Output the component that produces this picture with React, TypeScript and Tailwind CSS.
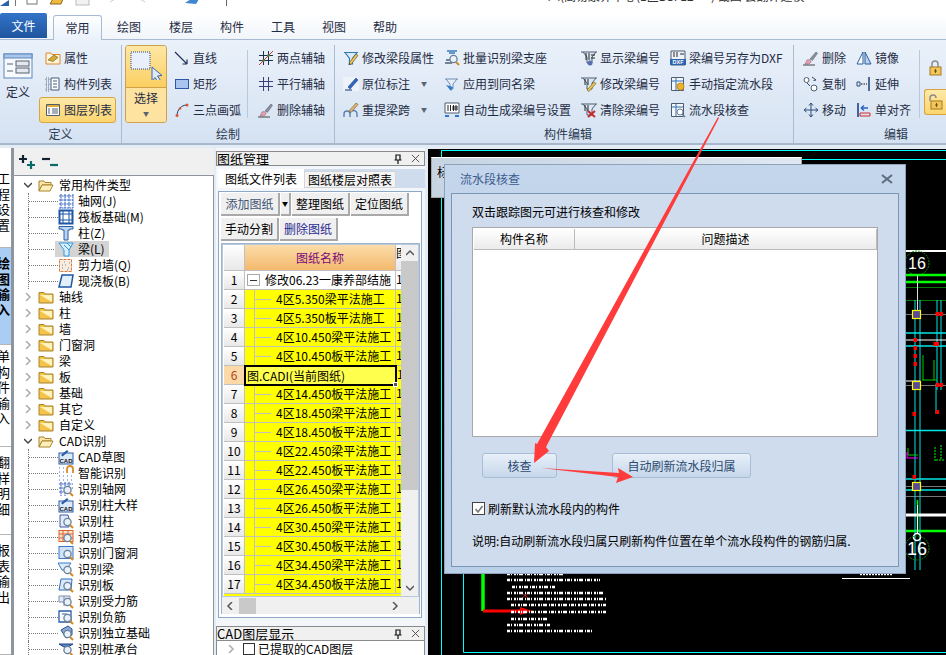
import type { ReactNode } from "react";

function Ico({ children, size = 16 }: { children: ReactNode; size?: number }) {
  return (
    <svg viewBox="0 0 16 16" width={size} height={size} className="shrink-0">
      {children}
    </svg>
  );
}

const Lens = () => (
  <>
    <circle cx="9.5" cy="9" r="3.6" fill="#e8f2fb" stroke="#6b7f96" strokeWidth="1.3" />
    <path d="M12 12l3 3" stroke="#d08a2a" strokeWidth="2" />
  </>
);

const Beam = ({ c = "#2f6db5" }: { c?: string }) => (
  <path d="M1 2.5h14M2 2.5l4.5 6v5.5h3V8.500l4.500-6z" fill="#dbe9f8" stroke={c} strokeWidth="1.200" />
);

const Hash = ({ c = "#1f2f55" }: { c?: string }) => (
  <path d="M5.500 1v14M10.500 1v14M1 5.500h14M1 10.500h14" stroke={c} strokeWidth="1" fill="none" />
);

const Pen = () => (
  <>
    <path d="M6 13l7-9 2 1.500-7 9z" fill="#e8c65a" stroke="#6d5a22" strokeWidth=".7" />
    <path d="M6 13l-.5 2 2-.5z" fill="#333" />
  </>
);

const Brush = () => (
  <>
    <path d="M7 9l6-7 1.500 1.300-5 7z" fill="#8a8fa8" stroke="#555" strokeWidth=".5" />
    <path d="M4 10c2-1 4 0 4 2-1 2-3 2-6 2z" fill="#e6a0b0" stroke="#8a5a6a" strokeWidth=".5" />
    <path d="M0 15h12" stroke="#444" />
  </>
);

const ribbonIcons: Record<string, ReactNode> = {
  attr: (
    <>
      <path d="M1 3h5l1 1.500h8V14H1z" fill="#fff4dc" stroke="#e0872a" />
      <path d="M3 10l6-5 4 2.500-5 4z" fill="#d3aa36" stroke="#6b5a20" strokeWidth=".6" />
    </>
  ),
  list: (
    <>
      <path d="M1 2h3v3H1zM1 7h3v3H1zM1 12h3v3H1z" fill="none" stroke="#5b6f88" strokeDasharray="1 1" />
      <path d="M6 2h8v12H6z" fill="#fff" stroke="#415a7c" />
      <path d="M8 5h4M8 8h4M8 11h4" stroke="#415a7c" />
    </>
  ),
  layer: (
    <>
      <path d="M1.500 2.500h13v11h-13z" fill="#fff" stroke="#4d5d70" />
      <path d="M2 3h12v2H2z" fill="#e5a933" />
      <path d="M3 7h2M3 9h2M3 11h2M7 7h6M7 9h6M7 11h6" stroke="#4d5d70" />
    </>
  ),
  line: <path d="M1 2l12 12M13 14V9.500M13 14H8.500" stroke="#1f2f55" strokeWidth="1.200" fill="none" />,
  rect: <rect x="1.500" y="3.500" width="13" height="9" fill="#a9c4ee" stroke="#2f57a8" />,
  arc: (
    <>
      <path d="M3 14C3 8 7 3 13 3" stroke="#1f3f6f" fill="none" />
      <circle cx="3" cy="13.500" r="1.500" fill="#e0532f" />
      <circle cx="13" cy="3" r="1.500" fill="#e0532f" />
      <circle cx="6" cy="6.500" r="1.300" fill="#e0532f" />
    </>
  ),
  twoPoint: (
    <>
      <Hash />
      <path d="M1 15L15 1" stroke="#d23030" />
      <circle cx="5.500" cy="10.500" r="1.300" fill="#4d8a30" />
      <circle cx="10.500" cy="5.500" r="1.300" fill="#4d8a30" />
    </>
  ),
  parallel: <Hash c="#3a3f6f" />,
  brush: <Brush />,
  beamPen: (
    <>
      <Beam c="#2f7cb5" />
      <Pen />
    </>
  ),
  markPen: (
    <>
      <path d="M0 1h16v14H0z" fill="#eef3fa" />
      <path d="M2 13h7v2H2z" fill="#7b93b8" />
      <path d="M5 11l8-9 2 2-8 9z" fill="#2f66c0" stroke="#1d3f80" strokeWidth=".6" />
    </>
  ),
  spanPen: (
    <>
      <path d="M1 15v-3a3 3 0 0 1 6 0v3M7 15v-3a3 3 0 0 1 7 0v3" stroke="#5a7fb0" fill="none" strokeWidth="1.400" />
      <path d="M6 9l7-8 2 1.500-7 8z" fill="#e3b27c" stroke="#6d5a22" strokeWidth=".6" />
    </>
  ),
  batch: (
    <>
      <path d="M3 1h10M5 3h6" stroke="#3a7cb5" strokeWidth="1.400" />
      <path d="M1 13h7M2 10h4" stroke="#4d5d70" strokeWidth="1.400" />
      <Lens />
    </>
  ),
  same: (
    <>
      <path d="M1 3h13M2 3l4 5v5h3V8l4-5" fill="#e6eef8" stroke="#6f8db0" />
      <path d="M2 9l5 6 2-4z" fill="#2f78c8" />
    </>
  ),
  autoNum: (
    <>
      <path d="M1 1h14v10H1z" fill="#fff" stroke="#4d5d70" />
      <path d="M4 3v6M6.500 3v6M9.500 3v6M12 3v6M8 5h6M8 7h6" stroke="#111" strokeWidth=".9" />
      <path d="M1 14h4M15 14h-4" stroke="#2f78c8" strokeWidth="2" />
    </>
  ),
  showNum: (
    <>
      <path d="M0 2h16M2 2l4 5v6h5V7l4-5" fill="#dde8f4" stroke="#4d5d70" />
      <path d="M5 3v7M8 3v7M10 5h4M10 8h4" stroke="#111" strokeWidth=".9" />
      <circle cx="9" cy="13" r="2.500" fill="#5a6fb0" />
    </>
  ),
  editNum: (
    <>
      <path d="M0 2h16M2 2l4 5v6h5V7l4-5" fill="#dde8f4" stroke="#4d5d70" />
      <path d="M4 3v6M7 3v6" stroke="#111" strokeWidth=".9" />
      <path d="M6 14l7-8 2 1.500-7 8z" fill="#e9c34f" stroke="#6d5a22" strokeWidth=".6" />
    </>
  ),
  clearNum: (
    <>
      <path d="M0 2h16M2 2l4 5v6h5V7l4-5" fill="#dde8f4" stroke="#4d5d70" />
      <path d="M4 3v6M7 3v6" stroke="#111" strokeWidth=".9" />
      <path d="M7 9l7 6M14 9l-7 6" stroke="#c02a2a" strokeWidth="2" />
    </>
  ),
  dxf: (
    <>
      <path d="M1 1h14v14H1z" fill="#eef3fa" stroke="#4d5d70" />
      <path d="M4 2v5M7 2v5M10 4h4" stroke="#111" strokeWidth=".9" />
      <path d="M0 9h16v6H0z" fill="#2a63b0" />
      <text x="8" y="14.400" fontSize="5.500" fill="#fff" textAnchor="middle" fontFamily="Liberation Sans" fontWeight="700">
        DXF
      </text>
    </>
  ),
  assign: (
    <>
      <path d="M1.500 1.500h12v13h-12z" fill="#f4f7fb" stroke="#4d5d70" />
      <path d="M6 2v12M2 5h11" stroke="#2f6db5" />
      <circle cx="10.500" cy="10.500" r="3.500" fill="#eeb32c" stroke="#c58a16" />
    </>
  ),
  check: (
    <>
      <path d="M1.500 1.500h12v13h-12z" fill="#f4f7fb" stroke="#4d5d70" />
      <path d="M6 2v12M2 5h11" stroke="#2f6db5" />
      <circle cx="10" cy="10" r="3" fill="#fff" stroke="#6b7f96" />
      <path d="M12 12l3 3" stroke="#6b7f96" strokeWidth="1.600" />
    </>
  ),
  del: <Brush />,
  copy: (
    <>
      <circle cx="3.500" cy="4" r="2.500" fill="#fff" stroke="#4d5d70" />
      <circle cx="11" cy="12" r="3" fill="#fff" stroke="#4d5d70" />
      <path d="M9 1l4 3M13 4l-2.500.5M7 10L4 7" stroke="#33445e" fill="none" />
    </>
  ),
  move: (
    <path d="M8 1v14M1 8h14M8 1L6 3.500M8 1l2 2.500M8 15l-2-2.500M8 15l2-2.500M1 8l2.500-2M1 8l2.500 2M15 8l-2.500-2M15 8l-2.500 2" stroke="#2a4d78" fill="none" />
  ),
  mirror: (
    <>
      <path d="M7 2L1 14h6z" fill="#fff" stroke="#2a5da0" />
      <path d="M9 2l6 12H9z" fill="#bcd2ef" stroke="#2a5da0" />
    </>
  ),
  extend: (
    <>
      <path d="M1 6h3v4H1z" fill="none" stroke="#2a4d78" />
      <path d="M5 8h6" stroke="#111" strokeDasharray="1.500 1" />
      <path d="M13 1v14" stroke="#2a4d78" strokeWidth="1.600" />
    </>
  ),
  align: (
    <>
      <path d="M2 1v14" stroke="#1f3f8f" strokeWidth="1.600" />
      <path d="M4 11h10v3H4z" fill="none" stroke="#d02a2a" />
      <path d="M12 6H5M5 6l3-2.500M5 6l3 2.500" stroke="#2a62c0" strokeWidth="1.300" fill="none" />
    </>
  ),
};

function Btn({ icon, label, drop = false, active = false, className = "" }: { icon: string; label: string; drop?: boolean; active?: boolean; className?: string }) {
  return (
    <div className={`flex h-[26px] items-center gap-[3px] whitespace-nowrap ${active ? "rounded-[3px] border border-[#d9a441] bg-linear-to-b from-[#fde9a8] to-[#fbd56e]" : ""} ${className}`}>
      <Ico>{ribbonIcons[icon]}</Ico>
      <span>{label}</span>
      {drop && <span className="ml-[8px] text-[6px] text-[#5a6270]">▼</span>}
    </div>
  );
}

function RibbonGroup({ title, className, children }: { title: string; className: string; children: ReactNode }) {
  return (
    <div className={`flex shrink-0 flex-col border-r border-[#a9bcd2] ${className}`}>
      <div className="flex h-[78px]">{children}</div>
      <div className="flex h-[22px] items-center justify-center pt-px text-[#2b3a50]">{title}</div>
    </div>
  );
}

function Ribbon() {
  return (
    <div className="flex h-[105px] border-b-2 border-[#a8b8cc] bg-linear-to-b from-[#eaf1fa] to-[#d5e2f2] pt-[5px] text-[#1f2c44]">
      <RibbonGroup title="定义" className="w-[122px]">
        <div className="ml-[3px] flex w-[30px] flex-col items-center pt-[8px]">
          <svg viewBox="0 0 30 26" width="30" height="26">
            <rect x="1" y="1" width="28" height="24" fill="#f6f9fd" stroke="#5c87bd" />
            <rect x="1" y="1" width="28" height="4" fill="#a9c6ea" stroke="#5c87bd" />
            <path d="M4 11h6M4 18h6" stroke="#55606e" />
            <rect x="13" y="8" width="13" height="5" fill="#e4e9f0" stroke="#55606e" />
            <rect x="13" y="15" width="13" height="5" fill="#e4e9f0" stroke="#55606e" />
          </svg>
          <span className="mt-[5px]">定义</span>
        </div>
        <div className="ml-[6px] flex w-[77px] flex-col">
          <Btn icon="attr" label="属性" className="pl-[6px]" />
          <Btn icon="list" label="构件列表" className="pl-[6px]" />
          <Btn icon="layer" label="图层列表" active className="pl-[5px]" />
        </div>
      </RibbonGroup>
      <RibbonGroup title="绘制" className="w-[213px]">
        <div className="ml-[3px] flex w-[42px] flex-col overflow-hidden rounded-[3px] border border-[#d3a04a]">
          <div className="flex h-[41px] justify-center bg-linear-to-b from-[#fde7a4] to-[#fbcf5f] pt-[4px]">
            <svg viewBox="0 0 36 30" width="36" height="30">
              <rect x="3" y="2" width="19" height="17" fill="#e9effb" stroke="#2a4a8a" strokeDasharray="1 1" />
              <path d="M24 17l0 14 3-3.500 3 4.500 2.500-1.500-3-4.500 4.500-.5z" fill="#dfe9fa" stroke="#3a66b0" />
            </svg>
          </div>
          <div className="flex flex-1 flex-col items-center border-t border-[#d3a04a] bg-[#fde2a0] pt-[2px]">
            <span>选择</span>
            <span className="text-[6px] text-[#5a6270]">▼</span>
          </div>
        </div>
        <div className="ml-[7px] flex w-[73px] flex-col">
          <Btn icon="line" label="直线" />
          <Btn icon="rect" label="矩形" />
          <Btn icon="arc" label="三点画弧" />
        </div>
        <div className="my-[5px] w-px bg-[#b9c9dc]" />
        <div className="ml-[10px] flex flex-col">
          <Btn icon="twoPoint" label="两点辅轴" />
          <Btn icon="parallel" label="平行辅轴" />
          <Btn icon="brush" label="删除辅轴" />
        </div>
      </RibbonGroup>
      <RibbonGroup title="构件编辑" className="w-[459px] pl-[8px]">
        <div className="flex w-[101px] flex-col">
          <Btn icon="beamPen" label="修改梁段属性" />
          <Btn icon="markPen" label="原位标注" drop />
          <Btn icon="spanPen" label="重提梁跨" drop />
        </div>
        <div className="flex w-[137px] flex-col">
          <Btn icon="batch" label="批量识别梁支座" />
          <Btn icon="same" label="应用到同名梁" />
          <Btn icon="autoNum" label="自动生成梁编号设置" />
        </div>
        <div className="flex w-[89px] flex-col">
          <Btn icon="showNum" label="显示梁编号" />
          <Btn icon="editNum" label="修改梁编号" />
          <Btn icon="clearNum" label="清除梁编号" />
        </div>
        <div className="flex flex-col">
          <Btn icon="dxf" label="梁编号另存为DXF" />
          <Btn icon="assign" label="手动指定流水段" />
          <Btn icon="check" label="流水段核查" />
        </div>
      </RibbonGroup>
      <div className="flex w-[152px] flex-col">
        <div className="flex h-[78px]">
          <div className="ml-[9px] flex w-[53px] flex-col">
            <Btn icon="del" label="删除" />
            <Btn icon="copy" label="复制" />
            <Btn icon="move" label="移动" />
          </div>
          <div className="flex w-[63px] flex-col">
            <Btn icon="mirror" label="镜像" />
            <Btn icon="extend" label="延伸" />
            <Btn icon="align" label="单对齐" />
          </div>
          <div className="my-[5px] w-px bg-[#b9c9dc]" />
          <div className="ml-[4px] flex flex-1 flex-col">
            <div className="flex h-[44px] items-center justify-center pt-[2px]">
              <Lock />
            </div>
            <div className="flex h-[26px] items-center justify-center rounded-l-[3px] border border-r-0 border-[#d9a441] bg-linear-to-b from-[#fde9a8] to-[#fbd56e]">
              <Lock open />
            </div>
          </div>
        </div>
        <div className="flex h-[22px] items-center pt-px pl-[90px] text-[#2b3a50]">编辑</div>
      </div>
    </div>
  );
}

function Lock({ open = false }: { open?: boolean }) {
  return (
    <Ico>
      <path d={open ? "M2 7V4a3 3 0 0 1 6 0" : "M5 7V4a3 3 0 0 1 6 0v3"} stroke="#8d8d8d" strokeWidth="1.500" fill="none" />
      <rect x="3" y="7" width="11" height="8" fill="#f2c65a" stroke="#a57a20" />
      <path d="M8.500 9v4M7 11h3" stroke="#6d5010" />
    </Ico>
  );
}

function TopBars() {
  const tabs = [
    ["绘图", "ml-[15px]"],
    ["楼层", "ml-[28px]"],
    ["构件", "ml-[27px]"],
    ["工具", "ml-[27px]"],
    ["视图", "ml-[27px]"],
    ["帮助", "ml-[27px]"],
  ];
  return (
    <>
      <div className="flex h-[14px] overflow-hidden bg-white">
        <svg viewBox="0 0 240 14" width="240" height="14" className="shrink-0">
          <path d="M0 6L9 0v6z" fill="#2a62b0" />
          <path d="M15.500 0v6" stroke="#777" />
          <rect x="27" y="-4" width="10" height="8" fill="#fff" stroke="#777" />
          <path d="M50 4l3-5h10l-2 5z" fill="#efb93c" stroke="#8a6a20" />
          <rect x="76" y="-3" width="13" height="8" fill="#f2f2f2" stroke="#bbb" />
          <path d="M110 2l5-3M145 2l-5-3" stroke="#ccc" />
          <path d="M185 3l6-4h8l-3 5z" fill="#3f86d0" />
          <path d="M226.500 0v6" stroke="#666" />
        </svg>
        <span className="-mt-[12px] ml-[308px] text-[12px] whitespace-nowrap text-[#333]">八(高易康养中心(1区1GF12 一 ) 截图 会翻译建模</span>
      </div>
      <div className="flex h-[26px] items-end border-b border-[#a8bbd2] bg-linear-to-b from-white to-[#f1f5fa] text-[#1f2c44]">
        <div className="mb-px flex h-[25px] w-[47px] items-center justify-center rounded-t-[2px] bg-linear-to-b from-[#3274c8] to-[#1f559f] text-white">文件</div>
        <div className="-mb-px ml-[6px] flex h-[25px] w-[49px] items-center justify-center rounded-t-[3px] border border-b-0 border-[#a8bbd2] bg-linear-to-b from-white to-[#eaf1fa]">常用</div>
        {tabs.map(([t, c]) => (
          <div key={t} className={`flex h-[25px] items-center ${c}`}>
            {t}
          </div>
        ))}
      </div>
    </>
  );
}

function VerticalTabs() {
  const items = [
    { chars: "工程设置", h: "h-[100px]", c: "bg-white", pt: "pt-[22px]" },
    { chars: "绘图输入", h: "h-[97px]", c: "bg-[#a9cdf3] font-bold", pt: "pt-[7px]" },
    { chars: "单构件输入", h: "h-[102px]", c: "bg-white", pt: "pt-[3px]" },
    { chars: "翻样明细", h: "h-[88px]", c: "bg-white", pt: "pt-[7px]" },
    { chars: "报表输出", h: "h-[120px]", c: "bg-white", pt: "pt-[7px]" },
  ];
  return (
    <div className="flex w-[14px] shrink-0 flex-col overflow-hidden border-r-[3px] border-[#8f959c] bg-white">
      {items.map((it) => (
        <div key={it.chars} className={`flex shrink-0 flex-col overflow-hidden border-b border-[#b5b5b5] ${it.h} ${it.c} ${it.pt}`}>
          {it.chars.split("").map((ch, i) => (
            <span key={i} className="-ml-[3px] h-[15.500px] text-[13px] leading-[15px] text-black">
              {ch}
            </span>
          ))}
        </div>
      ))}
    </div>
  );
}

const treeIcons: Record<string, ReactNode> = {
  grid: <path d="M1 3h14M1 7h14M1 11h14M1 15h14M3 1v14M7 1v14M11 1v14M15 1v14" stroke="#2f5fc0" strokeDasharray="2 .6" />,
  raft: (
    <>
      <rect x="1.500" y="1.500" width="13" height="13" fill="#fff" stroke="#1d56a5" strokeWidth="2" />
      <path d="M5 1v14M11 1v14M1 5h14M1 11h14" stroke="#1d56a5" />
    </>
  ),
  col: <path d="M1 1.500h14v2.500h-3v1H10v10H6V5H4V4H1z" fill="#bcd4f2" stroke="#2a5da8" />,
  beam: (
    <>
      <rect x="0" y="0" width="16" height="16" fill="#d4d4d4" />
      <path d="M1 2h14l-4 7v6H6V9z" fill="#d8eefb" stroke="#2f97dd" />
      <path d="M6 4l5 5M9 2l4 4" stroke="#2f97dd" />
    </>
  ),
  wall: (
    <>
      <rect x="1.500" y="2.500" width="12" height="12" fill="#f7ece2" stroke="#d97a3a" strokeDasharray="3 1" />
      <path d="M4 11h1M7 8h1M10 11h1M6 5h1M11 6h1M9 13h1M4 8h1" stroke="#888" />
    </>
  ),
  slab: <path d="M4 2h11l-2 12H1z" fill="#e4effc" stroke="#1d56a5" strokeWidth="1.500" />,
  cad: (
    <>
      <rect x="1" y="4" width="14" height="11" fill="#dbe9f8" stroke="#2a5da8" />
      <path d="M3 6l6-5 1.500 1.500-6 5z" fill="#2a5da8" />
      <text x="8" y="13.500" fontSize="6" fontWeight="700" fill="#111" textAnchor="middle" fontFamily="Liberation Sans">CAD</text>
    </>
  ),
  smart: (
    <>
      <path d="M1 7h1M5 7h1M1 11h1M5 11h1M9 11h1M13 11h1M1 15h1M5 15h1M9 15h1M13 15h1M1 3h1M5 3h1" stroke="#2f6fd0" />
      <path d="M9 8V4a3 3 0 0 1 6 0v4" stroke="#d98a2a" strokeWidth="1.800" fill="none" />
    </>
  ),
  rGrid: (
    <>
      <path d="M1 3h14M1 7h14M1 11h10M3 1v14M7 1v14M11 1v8" stroke="#2f5fc0" strokeDasharray="2 .6" />
      <Lens />
    </>
  ),
  rCol: (
    <>
      <path d="M2 2h8l1 4v8H2z" fill="#e4ebf8" stroke="#3a5aa8" />
      <Lens />
    </>
  ),
  rWall: (
    <>
      <rect x="1" y="1.500" width="14" height="11" fill="#f9e4d2" stroke="#d9652a" />
      <path d="M1 5h14M1 9h14M5 1v11M10 1v11" stroke="#d9652a" />
      <Lens />
    </>
  ),
  rDoor: (
    <>
      <rect x="1" y="1.500" width="14" height="12" fill="#cfe2f8" stroke="#3a78c8" />
      <Lens />
    </>
  ),
  rBeam: (
    <>
      <path d="M0 2h13L8 9H4z" fill="#dbe9f8" stroke="#3a78c8" />
      <Lens />
    </>
  ),
  rSlab: (
    <>
      <path d="M3 2h11l-1 11H1z" fill="#dbeafb" stroke="#2a6dc0" />
      <Lens />
    </>
  ),
  rBar: (
    <>
      <path d="M1 3h11v6H1zM6 3v10" fill="#e4ebf8" stroke="#7d8fa8" />
      <Lens />
    </>
  ),
  rNeg: (
    <>
      <path d="M1 2h12v11H1z" fill="#fff" stroke="#2a5da8" strokeWidth="1.300" />
      <path d="M4 5h5v4" stroke="#2a5da8" fill="none" />
      <Lens />
    </>
  ),
  rFound: (
    <>
      <path d="M3 5l7-4 4 3v6l-6 3z" fill="#8aa8d8" stroke="#2a4d88" />
      <Lens />
    </>
  ),
  rCap: (
    <>
      <path d="M1 3h14l-5 3H6z" fill="#5a8ad0" stroke="#1d3f80" />
      <Lens />
    </>
  ),
};

type TreeItem = { label: string; kind: "open" | "closed" | "child"; icon?: string; sel?: boolean };

const treeItems: TreeItem[] = [
  { label: "常用构件类型", kind: "open" },
  { label: "轴网(J)", kind: "child", icon: "grid" },
  { label: "筏板基础(M)", kind: "child", icon: "raft" },
  { label: "柱(Z)", kind: "child", icon: "col" },
  { label: "梁(L)", kind: "child", icon: "beam", sel: true },
  { label: "剪力墙(Q)", kind: "child", icon: "wall" },
  { label: "现浇板(B)", kind: "child", icon: "slab" },
  { label: "轴线", kind: "closed" },
  { label: "柱", kind: "closed" },
  { label: "墙", kind: "closed" },
  { label: "门窗洞", kind: "closed" },
  { label: "梁", kind: "closed" },
  { label: "板", kind: "closed" },
  { label: "基础", kind: "closed" },
  { label: "其它", kind: "closed" },
  { label: "自定义", kind: "closed" },
  { label: "CAD识别", kind: "open" },
  { label: "CAD草图", kind: "child", icon: "cad" },
  { label: "智能识别", kind: "child", icon: "smart" },
  { label: "识别轴网", kind: "child", icon: "rGrid" },
  { label: "识别柱大样", kind: "child", icon: "cad" },
  { label: "识别柱", kind: "child", icon: "rCol" },
  { label: "识别墙", kind: "child", icon: "rWall" },
  { label: "识别门窗洞", kind: "child", icon: "rDoor" },
  { label: "识别梁", kind: "child", icon: "rBeam" },
  { label: "识别板", kind: "child", icon: "rSlab" },
  { label: "识别受力筋", kind: "child", icon: "rBar" },
  { label: "识别负筋", kind: "child", icon: "rNeg" },
  { label: "识别独立基础", kind: "child", icon: "rFound" },
  { label: "识别桩承台", kind: "child", icon: "rCap" },
];

function Folder({ open }: { open: boolean }) {
  return (
    <Ico>
      {open ? (
        <>
          <path d="M1 4h5l1 1.500h6V8H4l-3 6z" fill="#fbe6a8" stroke="#a8842a" />
          <path d="M4 8h11l-3 6H1z" fill="#fdeebb" stroke="#a8842a" />
        </>
      ) : (
        <>
          <path d="M1 3.500h5l1 1.500h8v9H1z" fill="#f5c24a" stroke="#a8842a" />
          <path d="M2 6h12v7z" fill="#fff3c0" />
        </>
      )}
    </Ico>
  );
}

function TreeRow({ item }: { item: TreeItem }) {
  if (item.kind === "child") {
    return (
      <div className="ml-[14px] flex h-4 items-center border-l border-dotted border-[#777]">
        <div className="w-[29px] border-t border-dotted border-[#777]" />
        <div className={`flex h-4 items-center gap-[4px] pr-[4px] ${item.sel ? "-ml-[3px] bg-[#d4d4d4] pl-[3px]" : ""}`}>
          <Ico size={16}>{treeIcons[item.icon ?? "grid"]}</Ico>
          <span className="text-black">{item.label}</span>
        </div>
      </div>
    );
  }
  return (
    <div className="ml-[10px] flex h-4 items-center">
      <svg viewBox="0 0 8 8" width="8" height="8" className="shrink-0">
        {item.kind === "open" ? <path d="M0 2l4 4 4-4" stroke="#444" strokeWidth="1.500" fill="none" /> : <path d="M2 0l4 4-4 4" stroke="#aaa" strokeWidth="1.500" fill="none" />}
      </svg>
      <div className="ml-[6px]">
        <Folder open={item.kind === "open"} />
      </div>
      <span className="ml-[5px] text-black">{item.label}</span>
    </div>
  );
}

function TreePanel() {
  return (
    <div className="flex w-[200px] shrink-0 flex-col overflow-hidden">
      <div className="flex h-[28px] shrink-0 items-center gap-[7px] border-b border-[#8f959c] bg-[#f0f0f0] pl-[5px]">
        <svg viewBox="0 0 16 16" width="16" height="16">
          <path d="M0 5h8M4 1v8" stroke="#123" strokeWidth="2.200" />
          <path d="M8 11h8M12 7v8" stroke="#0b6a6a" strokeWidth="2.200" />
        </svg>
        <svg viewBox="0 0 16 16" width="16" height="16">
          <path d="M0 5h8" stroke="#123" strokeWidth="2.200" />
          <path d="M8 11h8" stroke="#0b6a6a" strokeWidth="2.200" />
        </svg>
      </div>
      <div className="flex-1 border-r border-[#8f959c] bg-white pt-px">
        {treeItems.map((it, i) => (
          <TreeRow key={i} item={it} />
        ))}
      </div>
    </div>
  );
}

function PanelHeader({ title }: { title: string }) {
  return (
    <div className="flex h-[15px] shrink-0 items-center border border-[#8a8a8a] bg-[#f0f0f0] text-[13px] leading-[13px] text-black">
      <span className="flex-1 overflow-hidden whitespace-nowrap">{title}</span>
      <svg viewBox="0 0 10 10" width="10" height="10" className="mr-[8px]">
        <path d="M3 1h4v5H3zM1.500 6h7M5 6v4" stroke="#111" strokeWidth="1.200" fill="none" />
      </svg>
      <svg viewBox="0 0 10 10" width="9" height="9" className="mr-[4px]">
        <path d="M1 1l8 8M9 1l-8 8" stroke="#444" />
      </svg>
    </div>
  );
}

function ToolBtn({ label, className = "" }: { label: string; className?: string }) {
  return <div className={`flex h-[23px] items-center justify-center border-r-2 border-b-2 border-[#a9a9a9] bg-[#f0f0f0] ${className}`}>{label}</div>;
}

const sheetRows = [
  "5.350梁", "5.350板", "10.450梁", "10.450板", "", "14.450板", "18.450梁", "18.450板", "22.450梁", "22.450板", "26.450梁", "26.450板", "30.450梁", "30.450板", "34.450梁", "34.450板",
];

function SheetTable() {
  return (
    <div className="flex min-w-0 flex-1 border-[1.500px] border-[#b9c9dc] pl-px">
      <div className="flex w-[177px] flex-col overflow-hidden">
        <div className="flex h-[26px] shrink-0 border-b border-[#c0c0c0]">
          <div className="w-[21px] border-r border-[#c0c0c0] bg-linear-to-b from-white to-[#e8e8e8]" />
          <div className="flex w-[150px] items-center justify-center bg-linear-to-b from-[#fbdca8] to-[#f3b96d] text-[#7a0a7a]">图纸名称</div>
          <div className="w-[6px] overflow-hidden border-l border-[#c0c0c0] bg-linear-to-b from-white to-[#e8e8e8] text-black">图</div>
        </div>
        <div className="flex h-[19px] shrink-0 border-b border-[#c0c0c0]">
          <div className="flex w-[21px] items-center justify-center border-r border-[#c0c0c0] bg-linear-to-b from-white to-[#e8e8e8]">1</div>
          <div className="flex w-[150px] items-center bg-white pl-[2px] whitespace-nowrap text-black">
            <div className="flex h-[12px] w-[13px] shrink-0 items-center justify-center border border-[#a9a9a9]">
              <div className="h-px w-[7px] bg-[#333]" />
            </div>
            <span className="ml-[5px]">修改06.23一康养部结施</span>
          </div>
          <div className="w-[6px] overflow-hidden border-l border-[#c0c0c0] bg-white text-black">1</div>
        </div>
        {sheetRows.map((s, i) => {
          const n = i + 2;
          if (n === 6) {
            return (
              <div key={n} className="flex h-[19px] shrink-0">
                <div className="flex w-[21px] items-center justify-center border-r border-b border-[#c0c0c0] bg-[#fcd9a8] text-[#b0431a]">6</div>
                <div className="relative -my-px -ml-px flex h-[21px] w-[153px] items-center border-[2px] border-black bg-[#ffff4d] pl-px text-black">
                  图.CADI(当前图纸)
                  <div className="absolute -right-[3px] -bottom-[3px] h-[5px] w-[5px] border border-white bg-[#555]" />
                </div>
                <div className="w-[4px] overflow-hidden bg-[#ffff00] text-black">1</div>
              </div>
            );
          }
          return (
            <div key={n} className="flex h-[19px] shrink-0 border-b border-[#c0c0c0]">
              <div className="flex w-[21px] items-center justify-center border-r border-[#c0c0c0] bg-linear-to-b from-white to-[#e8e8e8]">{n}</div>
              <div className="flex w-[150px] items-center bg-[#ffff00] whitespace-nowrap text-black">
                <div className="ml-[9px] h-[19px] w-px bg-[#c0c0c0]" />
                <div className="h-px w-[16px] bg-[#c0c0c0]" />
                <span className="ml-[5px]">4区{s}平法施工</span>
              </div>
              <div className="w-[6px] overflow-hidden border-l border-[#c0c0c0] bg-[#ffff00] text-black">1</div>
            </div>
          );
        })}
        <div className="h-[2px] shrink-0 bg-[#ffff00]" />
      </div>
      <div className="flex w-[17px] shrink-0 flex-col items-stretch bg-[#f0f0f0]">
        <div className="flex h-[16px] items-center justify-center">
          <svg viewBox="0 0 8 8" width="8" height="8">
            <path d="M0 6l4-4 4 4" stroke="#555" strokeWidth="1.500" fill="none" />
          </svg>
        </div>
        <div className="h-[229px] bg-[#c9c9c9]" />
        <div className="flex-1" />
        <div className="flex h-[16px] items-center justify-center">
          <svg viewBox="0 0 8 8" width="8" height="8">
            <path d="M0 2l4 4 4-4" stroke="#555" strokeWidth="1.500" fill="none" />
          </svg>
        </div>
      </div>
    </div>
  );
}

function SheetPanel() {
  return (
    <div className="flex w-[209px] shrink-0 flex-col overflow-hidden bg-[#f3f6fa] pt-[3px] text-black">
      <PanelHeader title="图纸管理" />
      <div className="mt-[3px] ml-[2px] flex h-[19px] items-end bg-[#cfdcee]">
        <div className="flex h-[19px] w-[86px] items-center justify-center bg-white">图纸文件列表</div>
        <div className="flex h-[17px] w-[92px] items-center justify-center border border-[#d4d4d4] bg-[#f4f4f4]">图纸楼层对照表</div>
      </div>
      <div className="mt-[3px] ml-[2px] flex h-[427px] w-[204px] flex-col border-[1.500px] border-[#8fa8c8] bg-white pr-px pb-[3px] pl-[2px]">
        <div className="flex gap-px pt-px">
          <ToolBtn label="添加图纸" className="w-[59px] text-[#3f5474]" />
          <div className="flex h-[23px] w-[10px] items-center justify-center border-r-2 border-b-2 border-[#a9a9a9] bg-[#f0f0f0] text-[6px]">▼</div>
          <ToolBtn label="整理图纸" className="w-[58px]" />
          <ToolBtn label="定位图纸" className="w-[58px]" />
        </div>
        <div className="mt-[2px] flex gap-px">
          <ToolBtn label="手动分割" className="w-[58px]" />
          <ToolBtn label="删除图纸" className="w-[58px] text-[#2a2a90]" />
        </div>
        <div className="mt-[2px] flex min-h-0 flex-1 flex-col border-[1.500px] border-[#9fb4cf]">
          <SheetTable />
          <div className="flex h-[17px] shrink-0 items-center bg-[#f0f0f0]">
            <svg viewBox="0 0 8 8" width="8" height="8" className="ml-[4px]">
              <path d="M6 0L2 4l4 4" stroke="#555" strokeWidth="1.500" fill="none" />
            </svg>
            <div className="ml-[5px] h-[16px] w-[17px] bg-[#c9c9c9]" />
            <div className="flex-1" />
            <svg viewBox="0 0 8 8" width="8" height="8" className="mr-[20px]">
              <path d="M2 0l4 4-4 4" stroke="#555" strokeWidth="1.500" fill="none" />
            </svg>
          </div>
        </div>
      </div>
      <div className="mt-[8px]">
        <PanelHeader title="CAD图层显示" />
      </div>
      <div className="flex flex-1 items-center border-x border-[#8a8a8a] bg-white pl-[10px]">
        <svg viewBox="0 0 8 8" width="8" height="8">
          <path d="M2 0l4 4-4 4" stroke="#aaa" strokeWidth="1.500" fill="none" />
        </svg>
        <div className="ml-[8px] h-[12px] w-[12px] border border-[#333]" />
        <span className="ml-[3px] whitespace-nowrap">已提取的CAD图层</span>
      </div>
    </div>
  );
}

function CadDrawing() {
  const notes = [
    [507, 574, 563], [507, 580, 600], [512, 587, 555], [507, 593, 603], [507, 599, 607], [511, 605, 606], [511, 612, 606], [511, 619, 548], [507, 625, 550], [507, 631, 593],
  ];
  const boxes = [310, 381, 482];
  const reds = [[915, 340], [915, 348], [915, 356], [915, 364], [937, 314], [941, 314], [937, 385], [941, 385], [937, 344], [914, 414], [914, 477], [937, 412], [935, 344]];
  return (
    <svg viewBox="428 149 518 506" width="518" height="506" className="absolute inset-0">
      <g stroke="#00ffff" fill="none">
        <path d="M441.500 150v505M441 150.500h505M802 159.500h144M463.500 159v493.500H946" />
      </g>
      <path d="M905 251h41" stroke="#fff" strokeWidth="2" />
      <circle cx="917" cy="263" r="12" fill="none" stroke="#0a8a0a" strokeDasharray="2 1" />
      <text x="917" y="269" fontSize="16" fill="#fff" textAnchor="middle" fontFamily="Liberation Sans">16</text>
      <path d="M905 275h41M905 282h41M905 531h41" stroke="#00ff00" strokeWidth="2.500" />
      <path d="M905 287.500h41M905 300.500h41" stroke="#067a06" />
      <path d="M917.500 275v35" stroke="#ddd" />
      <path d="M905 314.500h41M905 385.500h41M905 486.500h41M905 496.500h41" stroke="#777" />
      <path d="M915 300v270M920 300v270M937 300v90M941 300v90M936 414v-30" stroke="#00e5e5" fill="none" />
      <path d="M905 333h41M905 346h41M905 430.500h41M905 479h41M905 490h41" stroke="#00e5e5" strokeWidth="1.500" />
      <path d="M905 340h41M905 381h15" stroke="#fff" />
      <path d="M905 515h41" stroke="#fff" strokeWidth="3" />
      <path d="M917.500 500v30" stroke="#00ff00" strokeWidth="1.500" />
      <path d="M917.500 505v29" stroke="#fff" />
      <path d="M922 380h15M923 355v25M934 360v20M908 455h10M908 455v-7" stroke="#00d000" />
      <path d="M935 447v15M941 445v15M936 460h9" stroke="#00ff00" strokeDasharray="2 1" />
      <path d="M907 458h11M907 458v-6" stroke="#ff00ff" />
      {reds.map(([x, y], i) => (
        <rect key={i} x={x - 1.500} y={y - 2} width="3.500" height="4" fill="#f00" />
      ))}
      {boxes.map((y) => (
        <rect key={y} x="912.500" y={y + 0.500} width="8" height="8" fill="#5a4a9a" stroke="#ffff00" strokeWidth="1.200" />
      ))}
      <circle cx="917" cy="537" r="3.500" fill="none" stroke="#fff" strokeWidth="1.500" />
      <circle cx="917" cy="548" r="12" fill="none" stroke="#0a8a0a" strokeDasharray="2 1" />
      <text x="917" y="555" fontSize="18" fill="#fff" textAnchor="middle" fontFamily="Liberation Sans">16</text>
      <path d="M483 574v37" stroke="#00ff00" strokeWidth="3.500" />
      <path d="M483 611h40" stroke="#f00" strokeWidth="3" />
      <path d="M520 607l12 4-12 4z" fill="#f00" />
      <path d="M521 592l8 7M529 592l-8 7" stroke="#d02020" />
      {notes.map(([x1, y, x2]) => (
        <path key={y} d={`M${x1} ${y}H${x2}`} stroke="#fff" strokeWidth="2.500" strokeDasharray="3 1 1 2 2 1 1 1 4 2 1 1" />
      ))}
      <path d="M860 574h33" stroke="#fff" strokeWidth="2.500" strokeDasharray="2 1" />
      <path d="M842 578.500h68" stroke="#fff" />
    </svg>
  );
}

function Dialog() {
  const btn = "flex h-[25px] items-center justify-center rounded-[3px] border border-[#a9bdd6] bg-linear-to-b from-[#e8f0f9] to-[#c6d7eb] text-[#2c4a70]";
  return (
    <div className="absolute top-[15px] left-[16px] flex h-[410px] w-[462px] flex-col border border-[#8ea3ba] bg-linear-to-b from-[#c4d6ec] to-[#bacfe8] px-[6px] pb-[6px]">
      <div className="flex h-[28px] shrink-0 items-center justify-between pr-[6px] pl-[9px] text-[#3d5c8c]">
        <span>流水段核查</span>
        <svg viewBox="0 0 12 10" width="12" height="10">
          <path d="M1 1l10 8M11 1L1 9" stroke="#5f6f80" strokeWidth="2.200" />
        </svg>
      </div>
      <div className="flex flex-1 flex-col border border-[#7c96b5] bg-[#cfdcee] px-[20px] pt-[9px] text-black">
        <div className="h-[17px] leading-[17px]">双击跟踪图元可进行核查和修改</div>
        <div className="mt-[7px] flex h-[210px] flex-col border border-[#a8a8a8] bg-white p-px">
          <div className="flex h-[21px] w-[403px] shrink-0 border-b border-[#bbb] bg-linear-to-b from-white to-[#ebebeb]">
            <div className="flex w-[101px] items-center justify-center border-r border-[#bbb]">构件名称</div>
            <div className="flex flex-1 items-center justify-center border-r border-[#bbb]">问题描述</div>
          </div>
        </div>
        <div className="mt-[16px] flex">
          <div className={`ml-[10px] w-[75px] ${btn}`}>核查</div>
          <div className={`ml-[55px] w-[139px] ${btn}`}>自动刷新流水段归属</div>
        </div>
        <div className="mt-[24px] flex h-[13px] items-center">
          <div className="flex h-[13px] w-[13px] items-center justify-center border border-[#444] bg-white">
            <svg viewBox="0 0 10 10" width="10" height="10">
              <path d="M1.500 5l2.500 3 4.500-6" stroke="#777" strokeWidth="1.600" fill="none" />
            </svg>
          </div>
          <span className="ml-[3px]">刷新默认流水段内的构件</span>
        </div>
        <div className="mt-[17px] h-[17px] leading-[17px] whitespace-nowrap">说明:自动刷新流水段归属只刷新构件位置在单个流水段构件的钢筋归属.</div>
      </div>
    </div>
  );
}

export default function App() {
  return (
    <div className="relative h-[655px] w-[946px] overflow-hidden bg-white font-['Noto_Sans_CJK_SC',sans-serif] text-[12px] leading-[16px]">
      <TopBars />
      <Ribbon />
      <div className="h-[3px] bg-[#e3ebf5]" />
      <div className="flex h-[507px] bg-[#e3ebf5]">
        <VerticalTabs />
        <TreePanel />
        <div className="w-[2px] shrink-0" />
        <SheetPanel />
        <div className="w-[3px] shrink-0" />
        <div className="relative mt-px flex-1 overflow-hidden bg-black">
          <CadDrawing />
          {/* window behind the dialog */}
          <div className="absolute top-[8px] left-[3px] h-[41px] w-[371px] border border-[#a8a8a8] border-t-white bg-linear-to-r from-[#c6d4e2] to-[#dfe8f2] pl-[5px] text-black">
            <div className="mt-[4px] h-[24px] w-[8px] overflow-hidden bg-[#c9d5e4] leading-[20px]">标</div>
          </div>
          <Dialog />
        </div>
      </div>
      {/* hand-drawn red arrows over the screenshot */}
      <svg viewBox="0 0 946 655" width="946" height="655" className="pointer-events-none absolute inset-0">
        <polygon points="718,117 719,118 546,447 549,451 534,463 535,443 537,444" fill="#ff3b3b" />
        <polygon points="541,468 619,473 618,468 633,477 616,483 618,477" fill="#ff3b3b" />
      </svg>
    </div>
  );
}
